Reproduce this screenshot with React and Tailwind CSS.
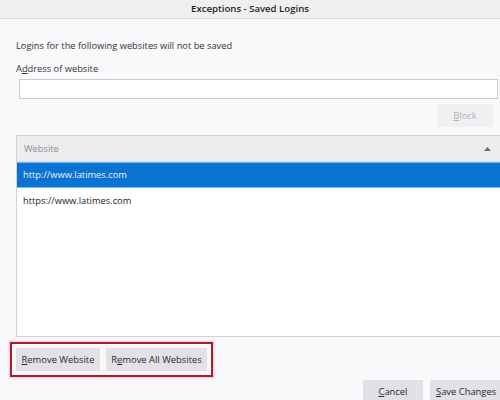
import React from 'react';

const font = { fontFamily: '"Open Sans", "Noto Sans", sans-serif' };

const Btn = ({ children, className = '' }) => (
  <button
    className={`h-[23px] shrink-0 bg-[#e1e1e6] text-[9.4px] leading-[23px] text-[#2b2b2b] text-center whitespace-nowrap ${className}`}
  >
    {children}
  </button>
);

export default function App() {
  return (
    <div
      className="w-[500px] h-[400px] overflow-hidden bg-[#f9f9fb] flex flex-col text-[#222]"
      style={font}
    >
      <div className="h-[19px] shrink-0 bg-[#efeff0] border-b border-[#dcdcdc] flex items-center justify-center text-[9.6px] font-semibold text-[#1f1f1f]">
        Exceptions - Saved Logins
      </div>

      <div className="flex flex-col pl-[16px]">
        <div className="mt-[19px] h-[16px] leading-[16px] text-[9.3px] text-[#333]">
          Logins for the following websites will not be saved
        </div>
        <div className="mt-[7px] h-[16px] leading-[16px] text-[9.3px] text-[#333]">
          A<span className="underline">d</span>dress of website
        </div>
        <input
          className="mt-[2px] ml-[3px] mr-[2px] h-[20px] bg-white border border-[#c9c9cf] outline-none"
          readOnly
        />
        <div className="flex justify-end mt-[5px] pr-[7px]">
          <Btn className="w-[56px] bg-[#f0f0f3] text-[#b3b3b8]">
            <span className="underline">B</span>lock
          </Btn>
        </div>

        <div className="mt-[8px] h-[202px] bg-white border-l border-t border-b border-[#d4d4d8] flex flex-col">
          <div className="h-[26px] bg-[#ededf0] border-b border-[#d4d4d8] flex items-center justify-between pl-[7px] pr-[9px] text-[9.3px] text-[#8c8c90]">
            <span>Website</span>
            <svg width="7" height="4" viewBox="0 0 7 4">
              <path d="M0 4 L3.5 0 L7 4 Z" fill="#6b6b70" />
            </svg>
          </div>
          <div className="h-[26px] bg-[#0a73d1] border-t border-b border-[#6cc0f5] flex items-center pl-[6px] text-[9.3px] text-[#eaf3fc]">
            http://www.latimes.com
          </div>
          <div className="h-[26px] flex items-center pl-[6px] text-[9.3px] text-[#222]">
            https://www.latimes.com
          </div>
        </div>

        <div className="mt-[5px] -ml-[6px] w-[203px] h-[35px] border-2 border-[#a3202e] shadow-[0_0_2px_1px_rgba(240,150,160,0.6)] flex items-center gap-[6px] pl-[4px]">
          <Btn className="w-[84px]">
            <span className="underline">R</span>emove Website
          </Btn>
          <Btn className="w-[101px]">
            R<span className="underline">e</span>move All Websites
          </Btn>
        </div>

        <div className="mt-[3px] flex justify-end gap-[7px] -mr-[10px]">
          <Btn className="w-[60px]">
            <span className="underline">C</span>ancel
          </Btn>
          <Btn className="w-[80px] text-left pl-[6px]">
            <span className="underline">S</span>ave Changes
          </Btn>
        </div>
      </div>
    </div>
  );
}
